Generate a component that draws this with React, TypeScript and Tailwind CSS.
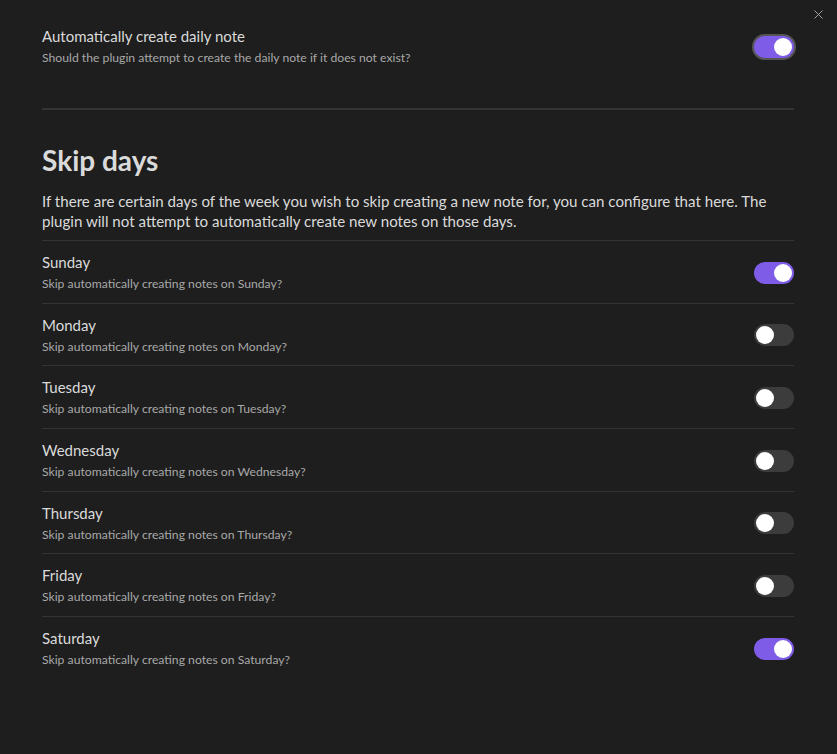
import { X } from "lucide-react";

const days = ["Sunday", "Monday", "Tuesday", "Wednesday", "Thursday", "Friday", "Saturday"];
const skipped: Record<string, boolean> = { Sunday: true, Saturday: true };

function Toggle({ on, focused = false }: { on: boolean; focused?: boolean }) {
  return (
    <div
      className={`w-[40px] h-[22px] rounded-full p-[2px] flex items-center shrink-0 ${
        on ? "bg-[#7f5ce8] justify-end" : "bg-[#3c3c3c] justify-start"
      } ${focused ? "ring-2 ring-[#555555]" : ""}`}
    >
      <div className="w-[18px] h-[18px] rounded-full bg-white" />
    </div>
  );
}

function SettingRow({ name, desc, on, focused }: { name: string; desc: string; on: boolean; focused?: boolean }) {
  return (
    <div className="flex items-center justify-between gap-6">
      <div>
        <div className="text-[15px] leading-[20px] text-[#dadada]">{name}</div>
        <div className="text-[12.2px] leading-[18px] text-[#a8a8a8] mt-[3px]">{desc}</div>
      </div>
      <Toggle on={on} focused={focused} />
    </div>
  );
}

export default function App() {
  return (
    <div
      className="relative w-[837px] h-[754px] bg-[#1e1e1e] overflow-hidden"
      style={{ fontFamily: '"Segoe UI", Lato, sans-serif' }}
    >
      <button className="absolute right-[11px] top-[7px] text-[#a0a0a0]">
        <X className="w-[15px] h-[15px]" strokeWidth={1.6} />
      </button>

      <div className="pl-[42px] pr-[43px]">
        <div className="pt-[26px] pb-[41px]">
          <SettingRow
            name="Automatically create daily note"
            desc="Should the plugin attempt to create the daily note if it does not exist?"
            on={true}
            focused
          />
        </div>
        <div className="h-[2px] bg-[#343434]" />

        <h2 className="text-[28px] leading-[32px] font-bold text-[#dadada] mt-[34px]">Skip days</h2>
        <p className="text-[15.1px] leading-[20px] text-[#dadada] mt-[15px] mb-[9px]">
          If there are certain days of the week you wish to skip creating a new note for, you can configure that here. The
          plugin will not attempt to automatically create new notes on those days.
        </p>

        {days.map((d) => (
          <div key={d} className="border-t border-[#343434] pt-[11px] pb-[9.7px]">
            <SettingRow name={d} desc={`Skip automatically creating notes on ${d}?`} on={!!skipped[d]} />
          </div>
        ))}
      </div>
    </div>
  );
}
